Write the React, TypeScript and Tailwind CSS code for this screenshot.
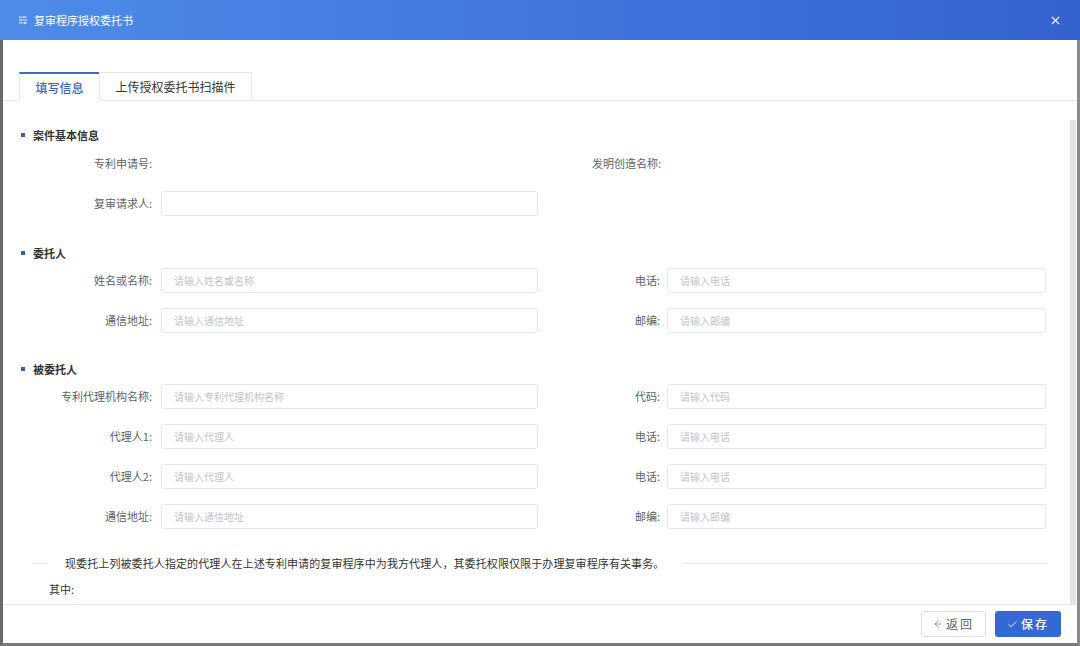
import React from "react";
import { SlidersHorizontal, X, ArrowLeft, Check } from "lucide-react";

const font = { fontFamily: '"Noto Sans CJK SC", "Noto Sans", sans-serif' };

function SectionTitle({ title, mt }: { title: string; mt: string }) {
  return (
    <div className={`flex items-center h-[16px] pl-[18px] ${mt}`}>
      <div className="w-[4px] h-[4px] bg-[#3d5ea8] mr-[8px]" />
      <span className="text-[11px] font-bold text-[#333]">{title}</span>
    </div>
  );
}

function Field({ ph }: { ph?: string }) {
  return (
    <div className="w-[377px] h-[25px] border border-[#e4e7ed] rounded-[3px] flex items-center pl-[12px] text-[10px] text-[#c0c4cc] bg-white">
      {ph}
    </div>
  );
}

function Row({
  l1,
  p1,
  l2,
  p2,
  mt,
}: {
  l1: string;
  p1?: string;
  l2?: string;
  p2?: string;
  mt: string;
}) {
  return (
    <div className={`flex items-center h-[25px] ${mt}`}>
      <div className="w-[150px] text-right text-[11px] text-[#606266] pr-[1px]">{l1}:</div>
      <div className="w-[8px]" />
      <Field ph={p1} />
      <div className="w-[122px] text-right text-[11px] text-[#606266]">{l2 ? `${l2}:` : ""}</div>
      <div className="w-[7px]" />
      {l2 ? (
        <div className="w-[379px] h-[25px] border border-[#e4e7ed] rounded-[3px] flex items-center pl-[12px] text-[10px] text-[#c0c4cc] bg-white">
          {p2}
        </div>
      ) : null}
    </div>
  );
}

export default function App() {
  return (
    <div className="w-[1080px] h-[646px] bg-white flex flex-col overflow-hidden" style={font}>
      {/* header */}
      <div className="h-[40px] shrink-0 bg-gradient-to-r from-[#4e8ce9] via-[#4277de] to-[#3562cf] flex items-center pl-[18px] pr-[18px] text-white">
        <SlidersHorizontal size={10} strokeWidth={2} />
        <span className="ml-[6px] text-[11px]">复审程序授权委托书</span>
        <div className="flex-1" />
        <X size={13} strokeWidth={2} />
      </div>

      <div className="flex-1 flex flex-col border-l-[3px] border-r-[3px] border-b-[3px] border-l-[#6a6a6a] border-r-[#8a8a8a] border-b-[#7a7a7a] min-h-0">
        {/* tabs */}
        <div className="h-[61px] shrink-0 flex items-end pl-[16px] border-b border-[#e8e8e8]">
          <div className="flex h-[29px] -mb-px">
            <div className="w-[80px] h-full border-t-2 border-t-[#3d6cc6] border-l border-l-[#e4e7ed] bg-white flex items-center justify-center text-[12px] font-medium text-[#3a67c2]">
              填写信息
            </div>
            <div className="w-[153px] h-full border-t border-r border-l border-[#e8e8e8] border-b bg-white flex items-center justify-center text-[12px] text-[#333]">
              上传授权委托书扫描件
            </div>
          </div>
        </div>

        {/* scroll content */}
        <div className="flex-1 flex min-h-0">
          <div className="flex-1 flex flex-col">
            <SectionTitle title="案件基本信息" mt="mt-[26px]" />
            <div className="flex items-center h-[25px] mt-[8px]">
              <div className="w-[150px] text-right text-[11px] text-[#606266] pr-[1px]">专利申请号:</div>
              <div className="w-[385px]" />
              <div className="w-[123px] text-right text-[11px] text-[#606266]">发明创造名称:</div>
            </div>
            <Row l1="复审请求人" p1="" mt="mt-[15px]" />

            <SectionTitle title="委托人" mt="mt-[29px]" />
            <Row l1="姓名或名称" p1="请输入姓名或名称" l2="电话" p2="请输入电话" mt="mt-[7px]" />
            <Row l1="通信地址" p1="请输入通信地址" l2="邮编" p2="请输入邮编" mt="mt-[15px]" />

            <SectionTitle title="被委托人" mt="mt-[28px]" />
            <Row l1="专利代理机构名称" p1="请输入专利代理机构名称" l2="代码" p2="请输入代码" mt="mt-[7px]" />
            <Row l1="代理人1" p1="请输入代理人" l2="电话" p2="请输入电话" mt="mt-[15px]" />
            <Row l1="代理人2" p1="请输入代理人" l2="电话" p2="请输入电话" mt="mt-[15px]" />
            <Row l1="通信地址" p1="请输入通信地址" l2="邮编" p2="请输入邮编" mt="mt-[15px]" />

            <div className="flex items-center h-[16px] mt-[26px] pl-[29px] pr-[22px]">
              <div className="w-[16px] h-px bg-[#e4e7ed]" />
              <span className="pl-[17px] pr-[20px] text-[11px] text-[#333] whitespace-nowrap tracking-[0.1px]">
                现委托上列被委托人指定的代理人在上述专利申请的复审程序中为我方代理人，其委托权限仅限于办理复审程序有关事务。
              </span>
              <div className="flex-1 h-px bg-[#e4e7ed]" />
            </div>
            <div className="h-[16px] mt-[10px] pl-[46px] text-[11px] text-[#333] flex items-center">其中:</div>
          </div>
          {/* scrollbar */}
          <div className="w-[6px] mr-[1px] mt-[19px] bg-[#e3e3e3]" />
        </div>

        {/* footer */}
        <div className="h-[39px] shrink-0 border-t border-[#e8e8e8] flex items-center justify-end pr-[16px] gap-[9px]">
          <div className="w-[65px] h-[26px] border border-[#dcdfe6] rounded-[3px] bg-white flex items-center justify-center text-[12px] text-[#606266] tracking-[2px]">
            <ArrowLeft size={10} strokeWidth={1.5} className="mr-[3px]" />
            返回
          </div>
          <div className="w-[66px] h-[26px] rounded-[3px] bg-[#3468d4] flex items-center justify-center text-[12px] text-white font-medium tracking-[2px]">
            <Check size={11} strokeWidth={2} className="mr-[3px]" />
            保存
          </div>
        </div>
      </div>
    </div>
  );
}
